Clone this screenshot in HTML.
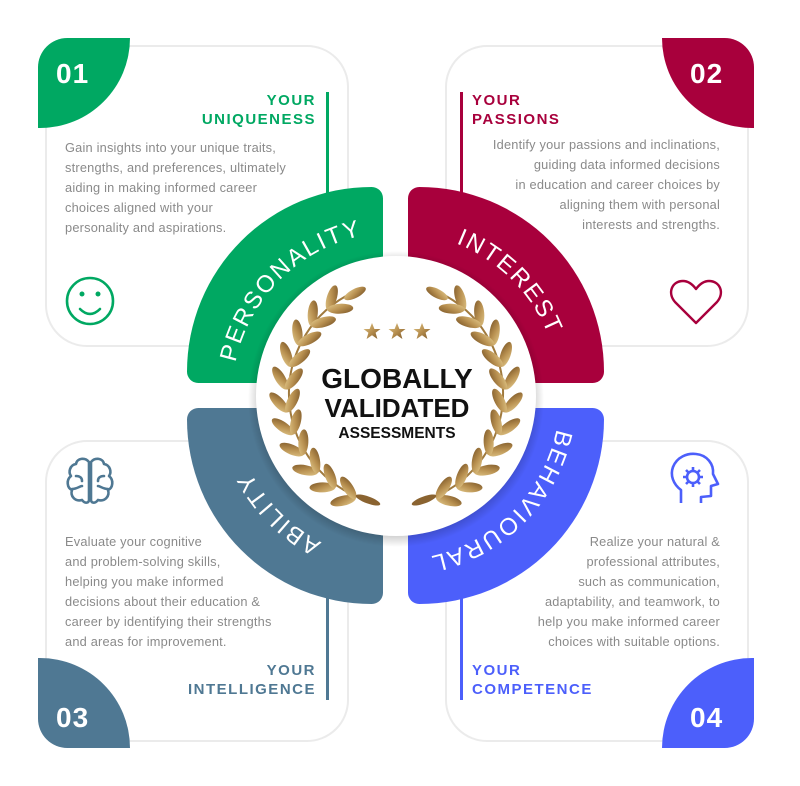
<!DOCTYPE html>
<html><head><meta charset="utf-8"><style>
*{margin:0;padding:0;box-sizing:border-box}
body{width:800px;height:786px;background:#fff;position:relative;overflow:hidden;font-family:"Liberation Sans",sans-serif}
.card{position:absolute;width:304px;height:302px;border:2.5px solid #ebebeb;border-radius:42px;background:#fff}
.tab{position:absolute;width:92px;height:90px;color:#fff;font-weight:bold;font-size:28px;letter-spacing:1px}
.tab span{position:absolute}
.h{position:absolute;font-weight:bold;font-size:15px;letter-spacing:1.5px;line-height:19px}
.p{position:absolute;font-size:12.8px;color:#8a8a8a;line-height:20px;letter-spacing:0.2px}
.vl{position:absolute;width:3px}
.q{position:absolute;width:196px;height:196px}
</style></head><body>
<div class="card" style="left:45px;top:45px"></div>
<div class="card" style="left:445px;top:45px"></div>
<div class="card" style="left:45px;top:440px"></div>
<div class="card" style="left:445px;top:440px"></div>

<div class="tab" style="left:38px;top:38px;background:#00a862;border-radius:30px 0 92px 0"><span style="left:18px;top:20px">01</span></div>
<div class="tab" style="left:662px;top:38px;background:#a8003c;border-radius:0 30px 0 92px"><span style="left:28px;top:20px">02</span></div>
<div class="tab" style="left:38px;top:658px;background:#4f7893;border-radius:0 92px 0 30px"><span style="left:18px;top:44px">03</span></div>
<div class="tab" style="left:662px;top:658px;background:#4c5ffb;border-radius:92px 0 30px 0"><span style="left:28px;top:44px">04</span></div>

<div class="vl" style="left:326px;top:92px;height:104px;background:#00a862"></div>
<div class="vl" style="left:460px;top:92px;height:104px;background:#a8003c"></div>
<div class="vl" style="left:326px;top:596px;height:104px;background:#4f7893"></div>
<div class="vl" style="left:460px;top:596px;height:104px;background:#4c5ffb"></div>

<div class="h" style="right:484px;top:91px;text-align:right;color:#00a862">YOUR<br>UNIQUENESS</div>
<div class="h" style="left:472px;top:91px;color:#a8003c">YOUR<br>PASSIONS</div>
<div class="h" style="right:484px;top:661px;text-align:right;color:#4f7893">YOUR<br>INTELLIGENCE</div>
<div class="h" style="left:472px;top:661px;color:#4c5ffb">YOUR<br>COMPETENCE</div>

<div class="p" style="left:65px;top:138px">Gain insights into your unique traits,<br>strengths, and preferences, ultimately<br>aiding in making informed career<br>choices aligned with your<br>personality and aspirations.</div>
<div class="p" style="right:80px;top:135px;text-align:right">Identify your passions and inclinations,<br>guiding data informed decisions<br>in education and career choices by<br>aligning them with personal<br>interests and strengths.</div>
<div class="p" style="left:65px;top:532px">Evaluate your cognitive<br>and problem-solving skills,<br>helping you make informed<br>decisions about their education &amp;<br>career by identifying their strengths<br>and areas for improvement.</div>
<div class="p" style="right:80px;top:532px;text-align:right">Realize your natural &amp;<br>professional attributes,<br>such as communication,<br>adaptability, and teamwork, to<br>help you make informed career<br>choices with suitable options.</div>

<div class="q" style="left:187px;top:187px;background:#00a862;border-radius:196px 12px 0 12px"></div>
<div class="q" style="left:408px;top:187px;background:#a8003c;border-radius:12px 196px 12px 0"></div>
<div class="q" style="left:187px;top:408px;background:#4f7893;border-radius:12px 0 12px 196px"></div>
<div class="q" style="left:408px;top:408px;background:#4c5ffb;border-radius:0 12px 196px 12px"></div>

<svg width="800" height="786" style="position:absolute;left:0;top:0">
<defs>
<linearGradient id="g" x1="0" y1="0" x2="1" y2="1"><stop offset="0" stop-color="#e2c88a"/><stop offset="0.5" stop-color="#b89050"/><stop offset="1" stop-color="#7a5526"/></linearGradient>
<radialGradient id="sh"><stop offset="0.85" stop-color="#000" stop-opacity="0.35"/><stop offset="1" stop-color="#000" stop-opacity="0"/></radialGradient>
<path id="p1" d="M232 396 A164 164 0 0 1 396 232"/>
<path id="p2" d="M396 232 A164 164 0 0 1 560 396"/>
<path id="p3" d="M396 560 A164 164 0 0 1 232 396"/>
<path id="p4" d="M560 396 A164 164 0 0 1 396 560"/>
<g id="lf">
<ellipse cx="12" cy="0" rx="13" ry="5" transform="rotate(55)" fill="url(#g)"/><ellipse cx="12" cy="0" rx="13" ry="5" transform="rotate(125)" fill="url(#g)"/></g>
</defs>
<text font-family="Liberation Sans" font-size="24" fill="#fff" letter-spacing="2"><textPath href="#p1" startOffset="50%" text-anchor="middle">PERSONALITY</textPath></text>
<text font-family="Liberation Sans" font-size="24" fill="#fff" letter-spacing="2"><textPath href="#p2" startOffset="50%" text-anchor="middle">INTEREST</textPath></text>
<text font-family="Liberation Sans" font-size="24" fill="#fff" letter-spacing="2"><textPath href="#p3" startOffset="50%" text-anchor="middle">ABILITY</textPath></text>
<text font-family="Liberation Sans" font-size="24" fill="#fff" letter-spacing="2"><textPath href="#p4" startOffset="50%" text-anchor="middle">BEHAVIOURAL</textPath></text>

<circle cx="396" cy="399" r="148" fill="url(#sh)"/>
<circle cx="396" cy="396" r="140" fill="#fff"/>

<g transform="translate(396 396)">
 <g id="L">
  <path d="M-30 104 A112 112 0 0 1 -50 -100" fill="none" stroke="#a07a3e" stroke-width="2"/>
  <g transform="rotate(112) translate(110 0)"><use href="#lf"/></g>
  <g transform="rotate(124) translate(110 0)"><use href="#lf"/></g>
  <g transform="rotate(136) translate(110 0)"><use href="#lf"/></g>
  <g transform="rotate(148) translate(110 0)"><use href="#lf"/></g>
  <g transform="rotate(160) translate(110 0)"><use href="#lf"/></g>
  <g transform="rotate(172) translate(110 0)"><use href="#lf"/></g>
  <g transform="rotate(184) translate(110 0)"><use href="#lf"/></g>
  <g transform="rotate(196) translate(110 0)"><use href="#lf"/></g>
  <g transform="rotate(208) translate(110 0)"><use href="#lf"/></g>
  <g transform="rotate(220) translate(110 0)"><use href="#lf"/></g>
  <g transform="rotate(232) translate(110 0)"><use href="#lf"/></g>
  <g transform="rotate(243) translate(110 0)"><ellipse cx="10" cy="0" rx="12" ry="4.5" transform="rotate(90)" fill="url(#g)"/></g>
  <ellipse cx="-28" cy="104" rx="13" ry="3.5" transform="rotate(20 -28 104)" fill="#8a6330"/>
 </g>
 <use href="#L" transform="scale(-1 1)"/>
</g>

<g fill="url(#g)">
<polygon points="372,323 374.4,329 380.5,329 375.6,332.8 377.4,339 372,335.2 366.6,339 368.4,332.8 363.5,329 369.6,329"/>
<polygon points="397,323 399.4,329 405.5,329 400.6,332.8 402.4,339 397,335.2 391.6,339 393.4,332.8 388.5,329 394.6,329"/>
<polygon points="422,323 424.4,329 430.5,329 425.6,332.8 427.4,339 422,335.2 416.6,339 418.4,332.8 413.5,329 419.6,329"/>
</g>
<text x="397" y="388" text-anchor="middle" font-family="Liberation Sans" font-weight="bold" font-size="28" fill="#111">GLOBALLY</text>
<text x="397" y="417" text-anchor="middle" font-family="Liberation Sans" font-weight="bold" font-size="26" fill="#111">VALIDATED</text>
<text x="397" y="438" text-anchor="middle" font-family="Liberation Sans" font-weight="bold" font-size="15.5" fill="#111">ASSESSMENTS</text>

<g fill="none" stroke="#00a862" stroke-width="2.6">
<circle cx="90" cy="301" r="23"/>
<path d="M80 309 Q90 319 100 309" stroke-linecap="round"/>
</g>
<circle cx="82" cy="294" r="2.5" fill="#00a862"/><circle cx="98" cy="294" r="2.5" fill="#00a862"/>
<path d="M696 323 L675 302 C667 293 672 281 683 281 C689 281 693 285 696 289 C699 285 703 281 709 281 C720 281 725 293 717 302 Z" fill="none" stroke="#a8003c" stroke-width="2.4" stroke-linejoin="round"/>
<g fill="none" stroke="#4f7893" stroke-width="2.6" stroke-linecap="round" stroke-linejoin="round">
<path d="M89 462 C85 457 77 458 76 464 C70 465 68 472 71 476 C66 480 67 488 72 490 C70 496 75 502 82 500 C85 504 89 503 89 500 Z"/>
<path d="M91 462 C95 457 103 458 104 464 C110 465 112 472 109 476 C114 480 113 488 108 490 C110 496 105 502 98 500 C95 504 91 503 91 500 Z"/>
<path d="M76 476 C80 476 82 478 82 481 M72 489 C77 489 80 486 82 486 M104 476 C100 476 98 478 98 481 M108 489 C103 489 100 486 98 486"/>
</g>
<g fill="none" stroke="#4c5ffb" stroke-width="2.6" stroke-linejoin="round">
<path d="M681 503 L681 490 C673 484 670 475 673 467 C677 457 687 453 696 454 C707 455 714 464 713 474 L718 484 L711 486 L711 496 L701 497 L701 503"/>
<circle cx="693" cy="477" r="6"/>
<path d="M693 467 V471 M693 483 V487 M683 477 H687 M699 477 H703 M686 470 L689 473 M697 481 L700 484 M700 470 L697 473 M686 484 L689 481"/>
</g>
</svg>
</body></html>
